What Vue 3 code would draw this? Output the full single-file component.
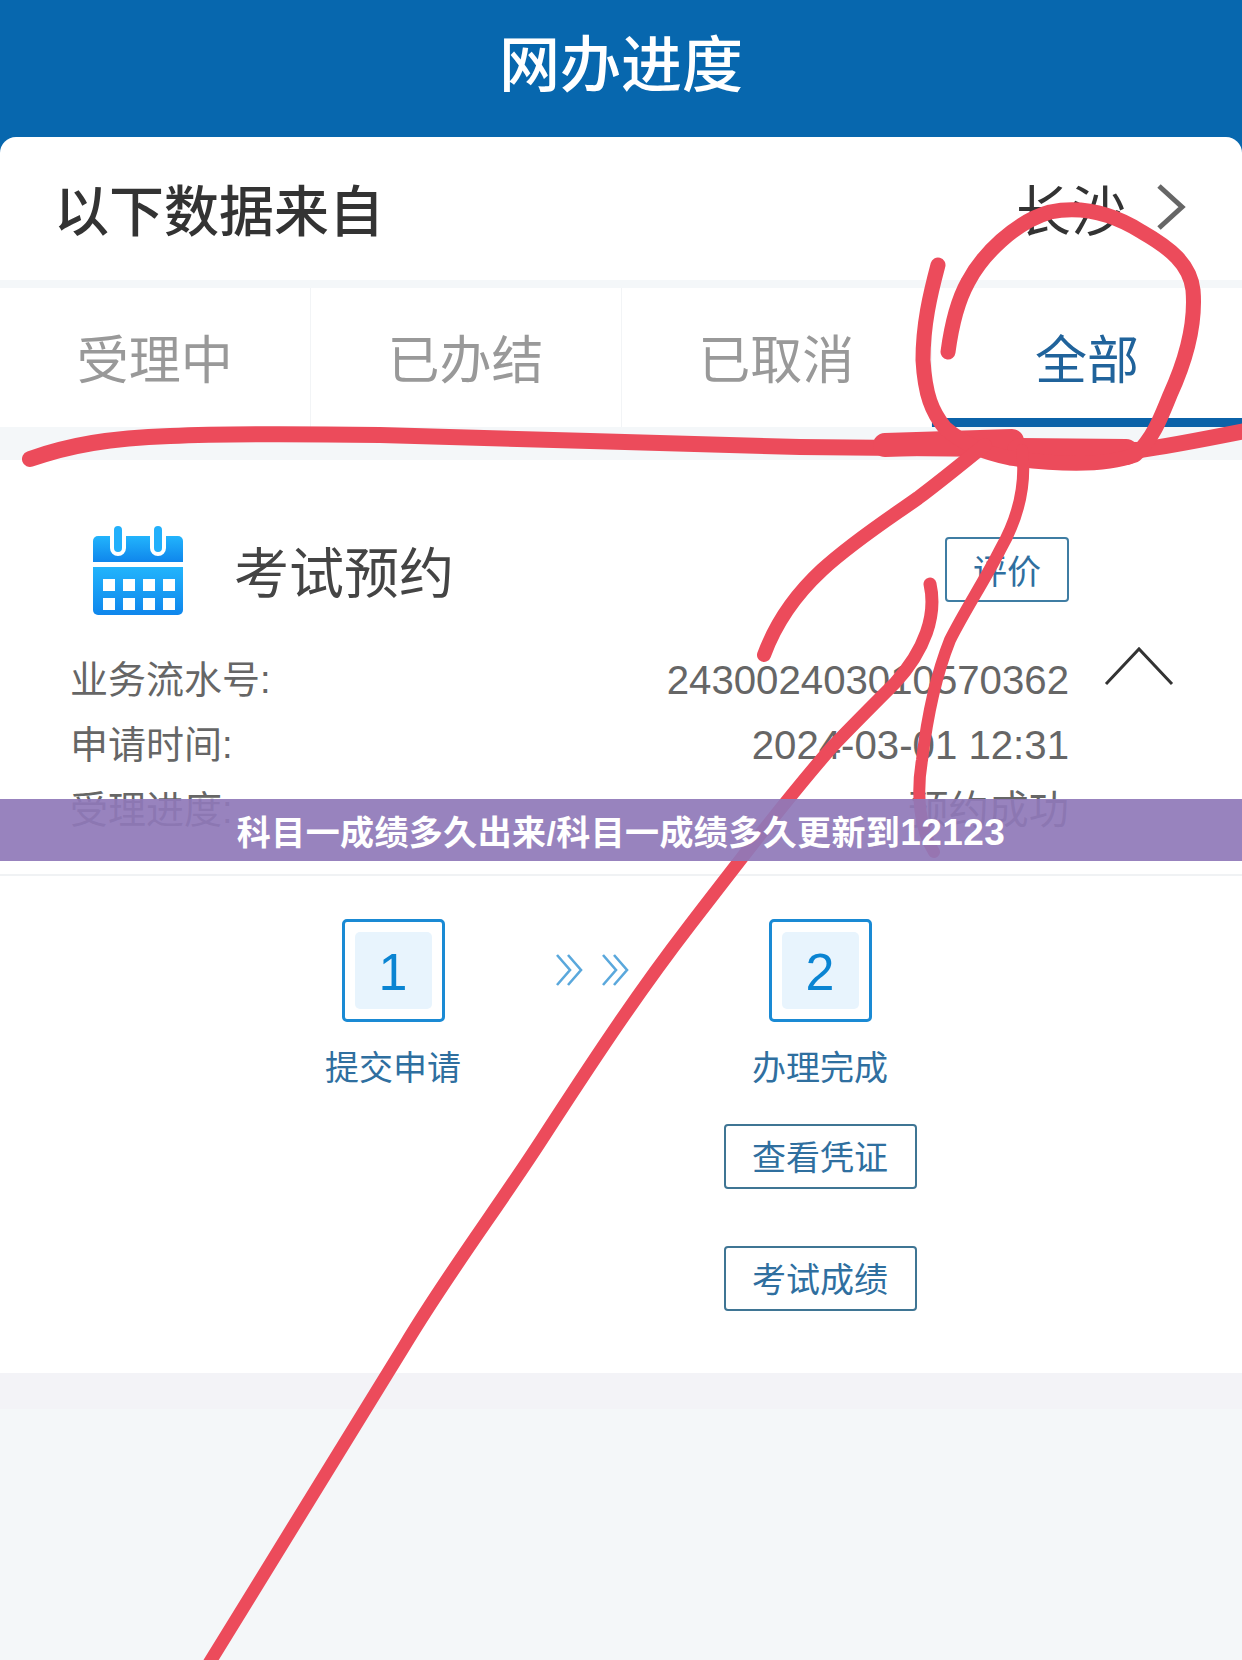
<template>
  <div class="page">
    <div class="top">
      <h1 class="title">网办进度</h1>
      <div class="source">
        <span class="source-label">以下数据来自</span>
        <span class="city">长沙</span>
        <svg class="city-arrow" width="30" height="48" viewBox="0 0 30 48">
          <path d="M3 3l23 21L3 45" fill="none" stroke="#666" stroke-width="5" />
        </svg>
      </div>
    </div>

    <div class="tabs">
      <div v-for="tab in tabs" :key="tab" class="tab" :class="{ active: tab === '全部' }">
        {{ tab }}
      </div>
    </div>

    <div class="record">
      <div class="record-head">
        <svg class="calendar" width="92" height="92" viewBox="0 0 92 92">
          <defs>
            <linearGradient id="calfill" x1="0" y1="0" x2="0" y2="1">
              <stop offset="0" stop-color="#22b4fc" />
              <stop offset="1" stop-color="#0f86ec" />
            </linearGradient>
          </defs>
          <path d="M5 12h80a5 5 0 0 1 5 5v21H0V17a5 5 0 0 1 5-5z" fill="url(#calfill)" />
          <path d="M0 43h90v43a5 5 0 0 1-5 5H5a5 5 0 0 1-5-5z" fill="url(#calfill)" />
          <rect x="19" y="0" width="12" height="30" rx="6" fill="#22b0fb" stroke="#fff" stroke-width="4" />
          <rect x="59" y="0" width="12" height="30" rx="6" fill="#22b0fb" stroke="#fff" stroke-width="4" />
          <g fill="#fff">
            <rect v-for="cell in cells" :key="cell.id" :x="cell.x" :y="cell.y" width="12" height="12" />
          </g>
        </svg>
        <span class="record-name">考试预约</span>
        <div class="rate">评价</div>
      </div>

      <div class="details">
        <div class="lines">
          <div v-for="line in lines" :key="line.label" class="line">
            <span>{{ line.label }}</span>
            <span class="value">{{ line.value }}</span>
          </div>
        </div>
        <svg class="collapse" width="70" height="40" viewBox="0 0 70 40">
          <path d="M2 38L35 3l33 35" fill="none" stroke="#333" stroke-width="3" />
        </svg>
      </div>

      <div class="steps">
        <div class="step">
          <div class="step-box"><span>1</span></div>
          <div class="step-name">提交申请</div>
        </div>
        <svg class="step-arrows" width="76" height="34" viewBox="0 0 76 34">
          <g fill="none" stroke="#5aa8dc" stroke-width="2.6">
            <path d="M2 2l13 15L2 32M13 2l13 15-13 15" />
            <path d="M48 2l13 15-13 15M59 2l13 15-13 15" />
          </g>
        </svg>
        <div class="step">
          <div class="step-box"><span>2</span></div>
          <div class="step-name">办理完成</div>
          <div class="step-btn first">查看凭证</div>
          <div class="step-btn">考试成绩</div>
        </div>
      </div>
    </div>
    <div class="record-foot"></div>

    <svg class="scribble" width="1242" height="1660" viewBox="0 0 1242 1660">
      <g fill="none" stroke="#ec4b5b" stroke-linecap="round" stroke-linejoin="round">
        <path stroke-width="16" d="M30 459C70 445 110 438 170 436C240 433 310 434 380 435C520 438 660 444 800 447L1000 449L1140 450C1170 446 1210 438 1250 430" />
        <path stroke-width="24" d="M885 445L1012 441" />
        <path stroke-width="26" d="M1020 451L1126 452" />
        <path stroke-width="15" d="M948 352C952 322 958 300 968 282C982 255 1015 222 1050 212C1085 205 1115 215 1142 232C1170 248 1190 264 1193 290C1196 325 1186 360 1170 395C1160 420 1152 440 1135 455C1105 466 1060 465 1010 458C985 453 965 445 945 428C932 412 925 395 923 360C923 325 930 295 938 265" />
        <path stroke-width="14" d="M985 445C960 465 942 480 918 498C890 518 855 540 822 570C795 595 775 625 764 655" />
        <path stroke-width="12" d="M1022 450C1026 480 1020 515 1000 550C985 580 965 610 950 640C938 670 928 710 922 760C916 795 920 830 934 852" />
        <path stroke-width="13" d="M930 584C937 615 925 650 895 683C870 708 850 728 832 747C790 795 740 860 690 925C640 990 600 1050 548 1130C500 1205 450 1270 405 1345C340 1450 275 1555 208 1665" />
      </g>
    </svg>

    <div class="banner">
      <span>科目一成绩多久出来/科目一成绩多久更新到<span class="banner-num">12123</span></span>
    </div>
  </div>
</template>

<script setup>
const tabs = ["受理中", "已办结", "已取消", "全部"];

const lines = [
  { label: "业务流水号:", value: "243002403010570362" },
  { label: "申请时间:", value: "2024-03-01 12:31" },
  { label: "受理进度:", value: "预约成功" },
];

// calendar day squares, 4 x 2
const cells = [];
for (let row = 0; row < 2; row++) {
  for (let col = 0; col < 4; col++) {
    cells.push({ id: row + "-" + col, x: 10 + col * 20, y: 55 + row * 19 });
  }
}
</script>

<style>
html,
body {
  margin: 0;
  background: #f4f7f9;
}
</style>

<style scoped>
.page {
  position: relative;
  width: 1242px;
  height: 1660px;
  overflow: hidden;
  background: #f4f7f9;
  font-family: "Liberation Sans", "Noto Sans CJK SC", sans-serif;
}
.top {
  background: #0767ae;
}
.title {
  margin: 0;
  height: 137px;
  padding-bottom: 17px;
  box-sizing: border-box;
  display: flex;
  align-items: center;
  justify-content: center;
  color: #fff;
  font-size: 61px;
  font-weight: 500;
}
.source {
  display: flex;
  align-items: center;
  height: 143px;
  padding: 0 56px 4px 54px;
  box-sizing: border-box;
  background: #fff;
  border-radius: 16px 16px 0 0;
  color: #333;
  font-size: 55px;
  font-weight: 500;
}
.source-label {
  flex: 1;
}
.city {
  font-weight: 400;
}
.city-arrow {
  margin-left: 30px;
}
.tabs {
  display: flex;
  height: 139px;
  margin-top: 8px;
  background: #fff;
}
.tab {
  flex: 1;
  display: flex;
  align-items: center;
  justify-content: center;
  padding-bottom: 3px;
  color: #999;
  font-size: 52px;
  box-sizing: border-box;
  border-right: 1px solid #f2f4f6;
}
.tab.active {
  color: #20639b;
  border-right: 0;
  border-bottom: 9px solid #0b62a8;
  padding: 6px 0 0;
}
.record {
  margin-top: 33px;
  height: 913px;
  background: #fff;
}
.record-foot {
  height: 36px;
  background: #f3f3f7;
}
.record-head {
  display: flex;
  align-items: center;
  height: 187px;
  padding: 32px 173px 0 93px;
  box-sizing: border-box;
}
.calendar {
  flex: none;
}
.record-name {
  flex: 1;
  margin-left: 49px;
  padding-bottom: 2px;
  color: #444;
  font-size: 55px;
}
.rate {
  width: 124px;
  height: 65px;
  box-sizing: border-box;
  display: flex;
  align-items: center;
  justify-content: center;
  border: 2px solid #3f7da3;
  border-radius: 4px;
  color: #2f6f9f;
  font-size: 34px;
}
.details {
  display: flex;
  border-bottom: 2px solid #f0f2f4;
  padding: 1px 68px 0 70px;
  height: 229px;
  box-sizing: border-box;
}
.lines {
  flex: 1;
}
.line {
  display: flex;
  justify-content: space-between;
  height: 65px;
  line-height: 65px;
  color: #666;
  font-size: 38px;
}
.value {
  font-size: 40.2px;
}
.collapse {
  margin: -2px 0 0 35px;
}
.steps {
  display: flex;
  justify-content: flex-start;
  padding: 43px 0 0 325px;
}
.step {
  width: 136px;
  display: flex;
  flex-direction: column;
  align-items: center;
  color: #2f6f9f;
}
.step-box {
  width: 103px;
  height: 103px;
  flex: none;
  box-sizing: border-box;
  padding: 10px;
  border: 3px solid #1a8ad4;
  border-radius: 5px;
}
.step-box span {
  display: flex;
  align-items: center;
  justify-content: center;
  height: 100%;
  box-sizing: border-box;
  padding-top: 3px;
  border-radius: 5px;
  background: #e8f4fd;
  color: #0a84d2;
  font-size: 52px;
}
.step-name {
  margin-top: 24px;
  font-size: 34px;
  line-height: 44px;
  white-space: nowrap;
}
.step-arrows {
  margin: 34px 0 0 94px;
  flex: none;
}
.step:last-child {
  margin-left: 121px;
}
.step-btn {
  flex: none;
  width: 193px;
  height: 65px;
  box-sizing: border-box;
  display: flex;
  align-items: center;
  justify-content: center;
  margin-top: 57px;
  padding-bottom: 2px;
  border: 2px solid #3f7594;
  border-radius: 4px;
  font-size: 34px;
  white-space: nowrap;
}
.step-btn.first {
  margin-top: 34px;
}
.scribble {
  position: absolute;
  left: 0;
  top: 0;
}
.banner {
  position: absolute;
  left: 0;
  right: 0;
  top: 799px;
  height: 62px;
  display: flex;
  align-items: center;
  justify-content: center;
  background: rgba(143, 120, 184, 0.92);
  color: #fff;
  font-size: 34px;
  font-weight: 700;
  letter-spacing: 0.4px;
}
.banner-num {
  font-size: 37px;
}
</style>
